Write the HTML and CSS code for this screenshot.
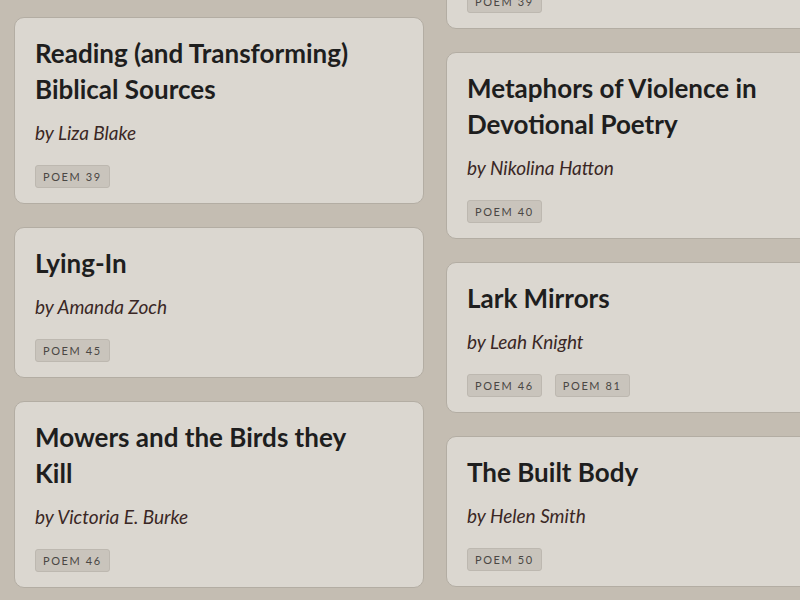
FILE: index.html
```html
<!DOCTYPE html>
<html lang="en">
<head>
<meta charset="utf-8">
<title>Poems</title>
<link rel="stylesheet" href="styles.css">
</head>
<body>
<main class="board">
  <div class="column">
    <article class="card">
      <h2 class="card-title">Reading (and Transforming) Biblical Sources</h2>
      <p class="card-author">by Liza Blake</p>
      <div class="tags"><span class="tag">Poem 39</span></div>
    </article>
    <article class="card">
      <h2 class="card-title">Lying-In</h2>
      <p class="card-author">by Amanda Zoch</p>
      <div class="tags"><span class="tag">Poem 45</span></div>
    </article>
    <article class="card">
      <h2 class="card-title">Mowers and the Birds they Kill</h2>
      <p class="card-author">by Victoria E. Burke</p>
      <div class="tags"><span class="tag">Poem 46</span></div>
    </article>
  </div>
  <div class="column column-offset">
    <article class="card">
      <h2 class="card-title">Animals, Angels, and the Garden of Eden</h2>
      <p class="card-author">by Liza Blake</p>
      <div class="tags"><span class="tag">Poem 39</span></div>
    </article>
    <article class="card">
      <h2 class="card-title">Metaphors of Violence in Devotional Poetry</h2>
      <p class="card-author">by Nikolina Hatton</p>
      <div class="tags"><span class="tag">Poem 40</span></div>
    </article>
    <article class="card">
      <h2 class="card-title">Lark Mirrors</h2>
      <p class="card-author">by Leah Knight</p>
      <div class="tags"><span class="tag">Poem 46</span><span class="tag">Poem 81</span></div>
    </article>
    <article class="card">
      <h2 class="card-title">The Built Body</h2>
      <p class="card-author">by Helen Smith</p>
      <div class="tags"><span class="tag">Poem 50</span></div>
    </article>
  </div>
</main>
</body>
</html>
```

FILE: styles.css
```css
html, body {
  margin: 0;
  padding: 0;
  overflow: hidden;
  background: #c4bdb2;
  height: 100%;
}

body {
  font-family: Lato, "Open Sans", sans-serif;
}

.board {
  display: grid;
  grid-template-columns: 410px 410px;
  column-gap: 22px;
  align-items: start;
  padding: 17px 0 0 14px;
  width: 900px;
}

.column {
  display: flex;
  flex-direction: column;
  gap: 23px;
}

.column-offset {
  margin-top: -175px;
}

.card {
  background: #dbd7d0;
  border: 1px solid #b3ada3;
  border-radius: 10px;
  padding: 17px 40px 15px 20px;
}

.card-title {
  margin: 0;
  font-size: 26px;
  line-height: 36px;
  font-weight: 700;
  color: #1e1e1e;
}

.card-author {
  margin: 12px 0 0;
  font-size: 19px;
  line-height: 28px;
  font-style: italic;
  color: #3a2725;
}

.tags {
  display: flex;
  gap: 13px;
  margin-top: 18px;
}

.tag {
  display: inline-block;
  background: #c9c4bc;
  border: 1px solid #bdb8b0;
  border-radius: 3px;
  padding: 0 7px;
  font-size: 11px;
  line-height: 21px;
  letter-spacing: 1.6px;
  text-transform: uppercase;
  color: #4a4744;
}
```
